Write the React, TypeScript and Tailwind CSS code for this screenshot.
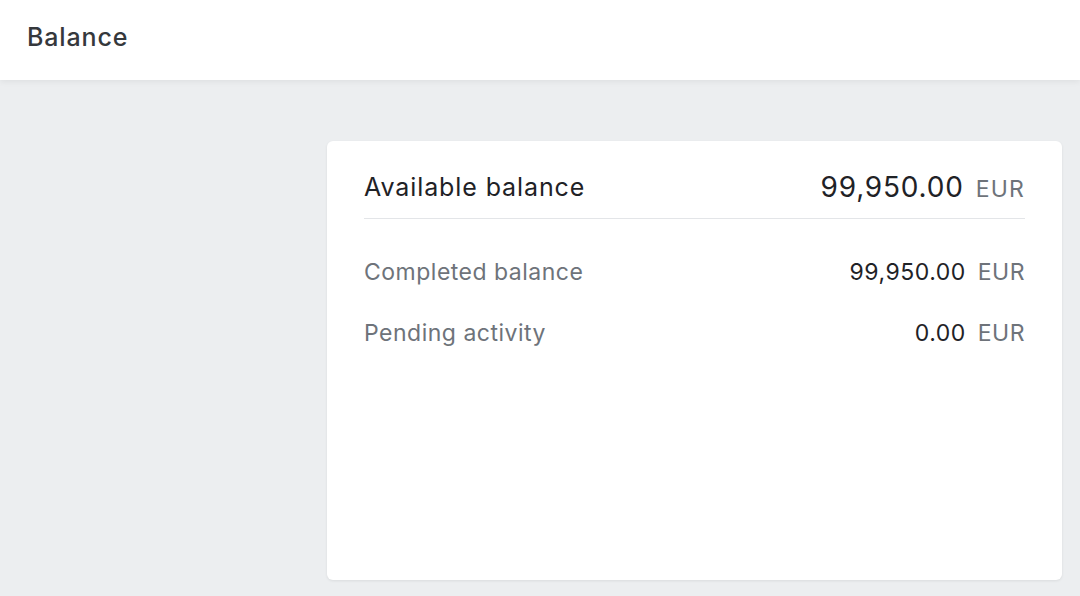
const rows = [
  { label: 'Completed balance', amount: '99,950.00' },
  { label: 'Pending activity', amount: '0.00' },
];

function BalanceCard() {
  return (
    <div className="h-[439px] rounded-md bg-white px-[37px] pt-[28px] shadow-[0_1px_3px_rgba(0,0,0,0.08)]">
      <div className="flex h-[50px] items-start justify-between border-b border-[#e3e5e8] leading-[36px]">
        <span className="text-[25px] tracking-[0.9px] text-[#1f2226]">Available balance</span>
        <span className="flex items-baseline gap-[12px]">
          <span className="text-[28px] tracking-[0.8px] text-[#1f2226]">99,950.00</span>
          <span className="text-[23px] tracking-[1.2px] text-[#6e737a]">EUR</span>
        </span>
      </div>
      <div className="flex flex-col gap-[30px] pt-[38px]">
        {rows.map(({ label, amount }) => (
          <div key={label} className="flex items-center justify-between text-[23px] leading-[31px] tracking-[0.5px]">
            <span className="text-[#6e737a]">{label}</span>
            <span className="flex items-baseline gap-[12px]">
              <span className="text-[#1f2226]">{amount}</span>
              <span className="text-[#6e737a]">EUR</span>
            </span>
          </div>
        ))}
      </div>
    </div>
  );
}

export default function App() {
  return (
    <div className="min-h-[596px] bg-[#eceef0] font-['Inter',sans-serif]">
      <header className="relative z-10 flex h-[80px] items-center bg-white px-[27px] pb-[4px] shadow-[0_2px_6px_rgba(0,0,0,0.06)]">
        <h1 className="text-[25px] font-medium tracking-[0.85px] text-[#35383c]">Balance</h1>
      </header>
      <main className="pl-[327px] pr-[18px] pt-[61px]">
        <BalanceCard />
      </main>
    </div>
  );
}
